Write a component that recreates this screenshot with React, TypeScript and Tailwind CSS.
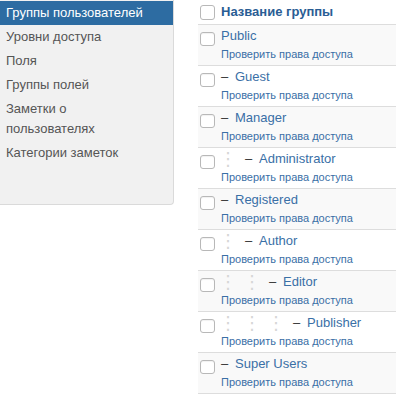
import React from "react";

type Row = { name: string; level: number };

const rows: Row[] = [
  { name: "Public", level: 0 },
  { name: "Guest", level: 1 },
  { name: "Manager", level: 1 },
  { name: "Administrator", level: 2 },
  { name: "Registered", level: 1 },
  { name: "Author", level: 2 },
  { name: "Editor", level: 3 },
  { name: "Publisher", level: 4 },
  { name: "Super Users", level: 1 },
];

const menu = [
  "Группы пользователей",
  "Уровни доступа",
  "Поля",
  "Группы полей",
  "Заметки о пользователях",
  "Категории заметок",
];

function Box() {
  return (
    <span className="block h-[14px] w-[15px] rounded-[3px] border border-[#b8b8b8] bg-white shadow-[inset_0_1px_1px_rgba(0,0,0,0.06)]" />
  );
}

export default function App() {
  return (
    <div
      className="flex h-[405px] w-[396px] items-start overflow-hidden bg-white text-[13px] text-[#555]"
      style={{ fontFamily: '"Liberation Sans", "DejaVu Sans", Arial, sans-serif' }}
    >
      <div className="h-[205px] w-[174px] shrink-0 rounded-br-[4px] border-b border-r border-[#dadada] bg-[#f1f1f1] pt-[1px]">
        {menu.map((m, i) => (
          <div
            key={m}
            className={
              i === 0
                ? "bg-[#2d6ca2] px-[6px] py-[2px] leading-[20px] text-white"
                : "px-[6px] py-[2px] pr-[30px] leading-[20px] text-[#555]"
            }
          >
            {m}
          </div>
        ))}
      </div>
      <div className="ml-[24px] w-[198px] shrink-0">
        <div className="flex h-[25px] items-center border-b border-[#dddddd] pl-[2px]">
          <div className="w-[21px] shrink-0">
            <span className="block h-[15px] w-[15px] rounded-[3px] border border-[#b8b8b8] bg-white" />
          </div>
          <span className="font-bold text-[#2a5d94] leading-[18px]">Название группы</span>
        </div>
        {rows.map((r, i) => (
          <div
            key={r.name}
            className={
              "flex h-[41px] border-b border-[#dddddd] pl-[2px] " +
              (i % 2 === 0 ? "bg-[#f9f9f9]" : "bg-white")
            }
          >
            <div className="w-[21px] shrink-0 pt-[7px]">
              <Box />
            </div>
            <div className="flex flex-col pt-[3px]">
              <div className="flex h-[16px] items-center whitespace-nowrap leading-[16px]">
                {Array.from({ length: Math.max(0, r.level - 1) }).map((_, k) => (
                  <span
                    key={k}
                    className="inline-block w-[24px] -indent-[2px] text-[18px] leading-[16px] text-[#d6d6d6]"
                  >
                    ⋮
                  </span>
                ))}
                {r.level > 0 && (
                  <span className="inline-block w-[14px] text-[#333]">–</span>
                )}
                <span className="text-[#3a6fa6]">{r.name}</span>
              </div>
              <div className="mt-[2px] whitespace-nowrap text-[11px] leading-[16px] text-[#3a6fa6]">
                Проверить права доступа
              </div>
            </div>
          </div>
        ))}
      </div>
    </div>
  );
}
